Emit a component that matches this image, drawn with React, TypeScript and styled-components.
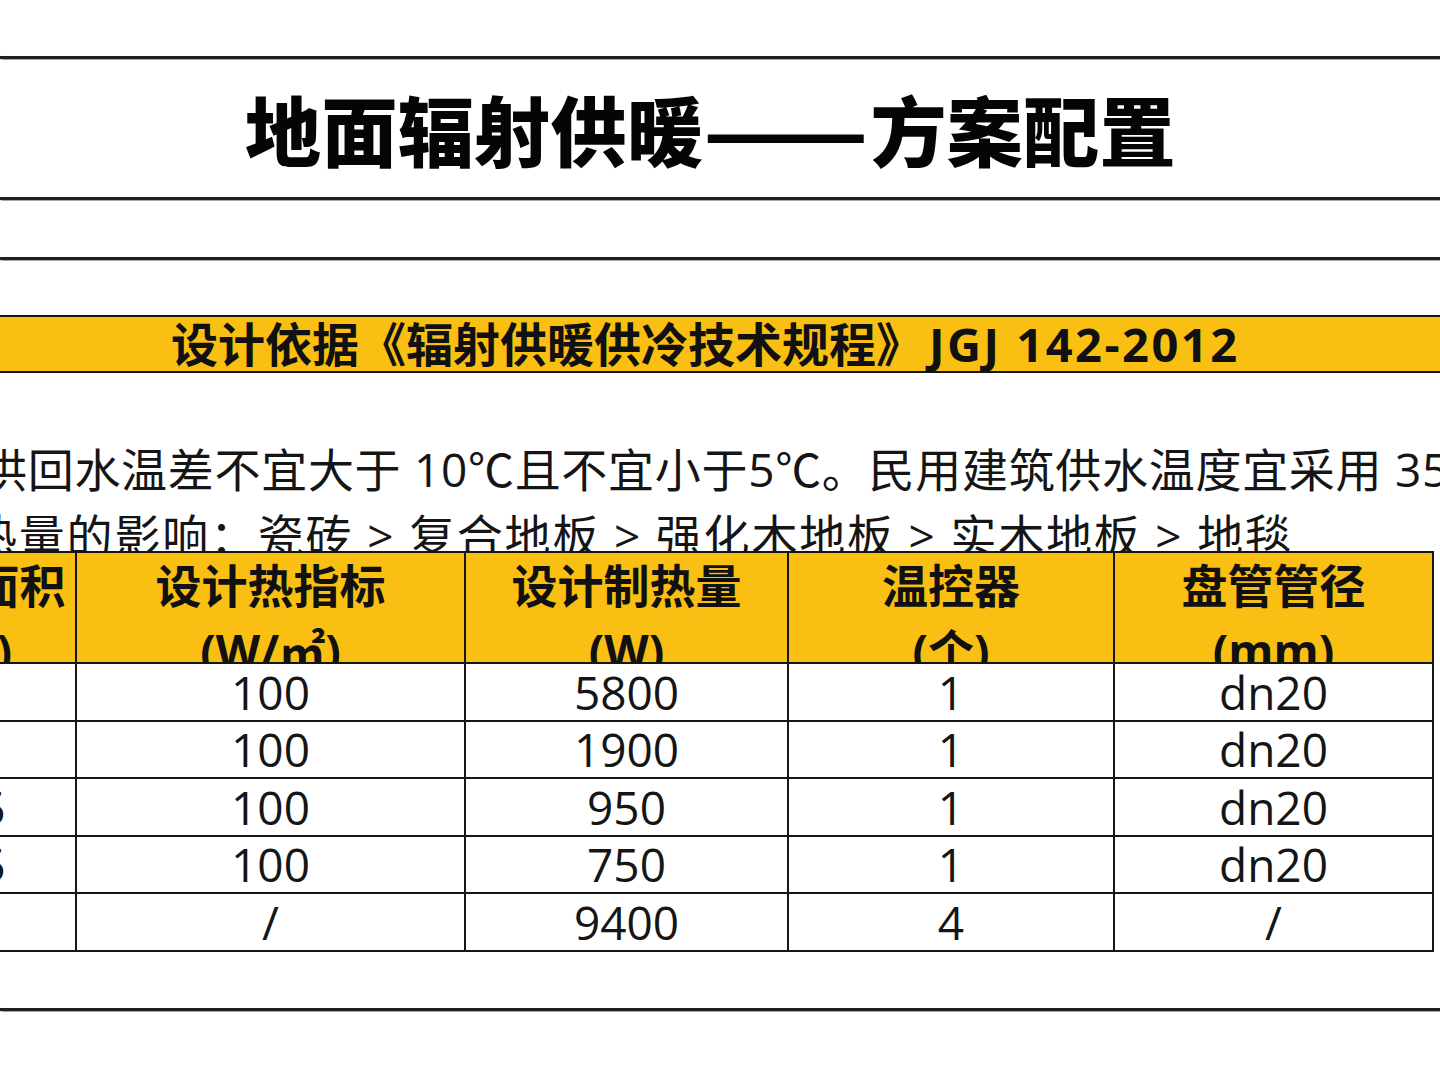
import React from "react";
import styled, { createGlobalStyle } from "styled-components";

const GlobalStyle = createGlobalStyle`
  html, body {
    margin: 0;
    padding: 0;
    background: #ffffff;
  }
  body {
    width: 1440px;
    height: 1080px;
    overflow: hidden;
    font-family: "Open Sans", "Noto Sans CJK SC", sans-serif;
    color: #111111;
  }
`;

const YELLOW = "#F9BF12";
const LINE = "#161616";

const Page = styled.div`
  width: 1440px;
  height: 1080px;
  box-sizing: border-box;
  padding-top: 56px;
  overflow: hidden;
  display: flex;
  flex-direction: column;
  background: #ffffff;
`;

const Rule = styled.div<{ $top?: number }>`
  flex-shrink: 0;
  height: 3px;
  margin-top: ${(p) => p.$top ?? 0}px;
  background: #202020;
  box-shadow: 0 0 1px 0.5px rgba(0, 0, 0, 0.35);
`;

const TitleBar = styled.header`
  flex-shrink: 0;
  height: 138px;
  display: flex;
  align-items: center;
  padding-left: 245px;
`;

const Title = styled.h1`
  margin: 0;
  font-family: "Noto Sans CJK SC", sans-serif;
  font-size: 76px;
  font-weight: 900;
  line-height: 1;
  color: #050505;
  white-space: nowrap;
  display: flex;
  align-items: center;
  letter-spacing: 0.4px;
`;

const DashBox = styled.span`
  display: inline-block;
  width: 167px;
  overflow: visible;
`;

const Dash = styled.span`
  display: inline-block;
  transform: scaleX(1.27);
  transform-origin: left center;
`;

const Banner = styled.div`
  flex-shrink: 0;
  margin-top: 55px;
  height: 58px;
  box-sizing: border-box;
  border-top: 2px solid ${LINE};
  border-bottom: 2px solid ${LINE};
  background: ${YELLOW};
  display: flex;
  align-items: center;
  padding-left: 171px;
`;

const BannerText = styled.h2`
  margin: 0;
  font-family: "Open Sans", "Noto Sans CJK SC", sans-serif;
  font-size: 47px;
  font-weight: 700;
  line-height: 1;
  color: #111111;
  white-space: nowrap;
`;

const Code = styled.span`
  margin-left: 6px;
  letter-spacing: 2.5px;
`;

const Notes = styled.div`
  flex-shrink: 0;
  height: 178px;
  box-sizing: border-box;
  padding-top: 63px;
  overflow: visible;
`;

const NoteLine = styled.p<{ $shift: number; $track?: number }>`
  margin: 0 0 0 ${(p) => p.$shift}px;
  font-family: "Open Sans", "Noto Sans CJK SC", sans-serif;
  font-size: 46px;
  font-weight: 400;
  line-height: 66px;
  letter-spacing: ${(p) => p.$track ?? 0}px;
  color: #151515;
  white-space: nowrap;
`;

const Grid = styled.div`
  position: relative;
  z-index: 1;
  flex-shrink: 0;
  display: grid;
  grid-template-columns: 205px 389px 323px 326px 319px;
  width: max-content;
  margin-left: -130px;
  border-top: 2px solid ${LINE};
  border-left: 2px solid ${LINE};
`;

const HeadCell = styled.div`
  height: 111px;
  box-sizing: border-box;
  overflow: hidden;
  background: ${YELLOW};
  border-right: 2px solid ${LINE};
  border-bottom: 2px solid ${LINE};
  text-align: center;
  font-family: "Open Sans", "Noto Sans CJK SC", sans-serif;
  font-size: 46px;
  font-weight: 700;
  line-height: 65px;
  color: #111111;
  white-space: nowrap;
`;

const Cell = styled.div`
  height: 57.5px;
  box-sizing: border-box;
  background: #ffffff;
  border-right: 2px solid ${LINE};
  border-bottom: 2px solid ${LINE};
  display: flex;
  align-items: center;
  justify-content: center;
  font-family: "Open Sans", "Noto Sans CJK SC", sans-serif;
  font-size: 46px;
  font-weight: 400;
  line-height: 1;
  color: #151515;
  white-space: nowrap;
`;

const headers: [string, string][] = [
  ["房间面积", "(㎡)"],
  ["设计热指标", "(W/㎡)"],
  ["设计制热量", "(W)"],
  ["温控器", "(个)"],
  ["盘管管径", "(mm)"],
];

const rows: string[][] = [
  ["58", "100", "5800", "1", "dn20"],
  ["19", "100", "1900", "1", "dn20"],
  ["9.5", "100", "950", "1", "dn20"],
  ["7.5", "100", "750", "1", "dn20"],
  ["94", "/", "9400", "4", "/"],
];

export default function App() {
  return (
    <>
      <GlobalStyle />
      <Page>
        <Rule />
        <TitleBar>
          <Title>
            地面辐射供暖
            <DashBox>
              <Dash>——</Dash>
            </DashBox>
            方案配置
          </Title>
        </TitleBar>
        <Rule />
        <Rule $top={57} />
        <Banner>
          <BannerText>
            设计依据《辐射供暖供冷技术规程》<Code>JGJ 142-2012</Code>
          </BannerText>
        </Banner>
        <Notes>
          <NoteLine $shift={-19} $track={0.7}>
            供回水温差不宜大于 10℃且不宜小于5℃。民用建筑供水温度宜采用 35～45℃，不应大于60℃。
          </NoteLine>
          <NoteLine $shift={-29} $track={1.8}>
            热量的影响：瓷砖 &gt; 复合地板 &gt; 强化木地板 &gt; 实木地板 &gt; 地毯
          </NoteLine>
        </Notes>
        <Grid>
          {headers.map(([a, b]) => (
            <HeadCell key={a}>
              {a}
              <br />
              {b}
            </HeadCell>
          ))}
          {rows.map((r, i) =>
            r.map((v, j) => <Cell key={`${i}-${j}`}>{v}</Cell>)
          )}
        </Grid>
        <Rule $top={56} />
      </Page>
    </>
  );
}
